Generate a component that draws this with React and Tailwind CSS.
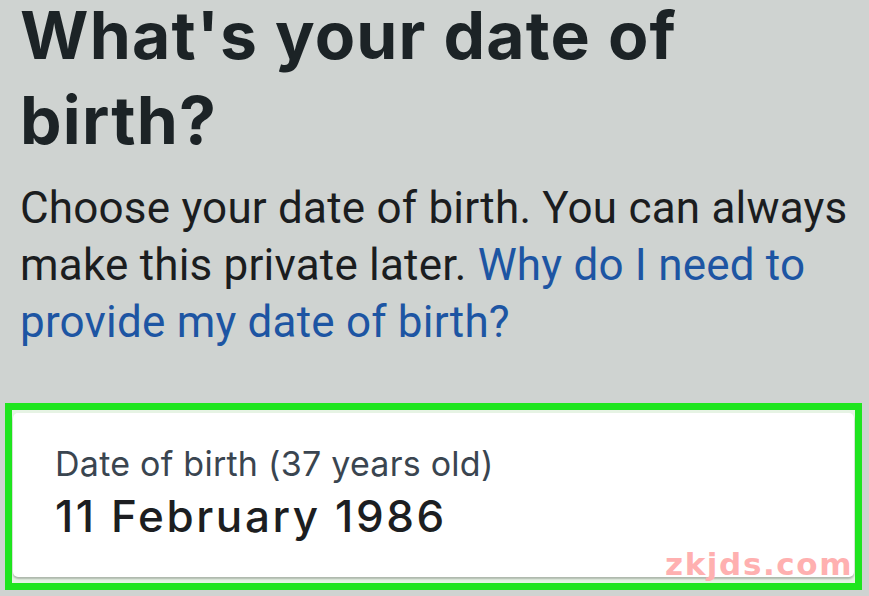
export default function App() {
  return (
    <div className="relative w-[869px] h-[596px] overflow-hidden bg-[#cfd3d1]" style={{ fontFamily: "Inter, Roboto, sans-serif" }}>
      <div className="pl-[20px]">
        <h1 className="text-[66px] leading-[70px] font-bold text-[#1c2326] tracking-[1.2px]">
          <span className="block">What's your date of</span>
          <span className="block mt-[15px]">birth?</span>
        </h1>
        <p className="mt-[25px] text-[44px] leading-[57px] text-[#1b1d1f] tracking-[0.2px] w-[849px]" style={{ fontFamily: "Roboto, sans-serif" }}>
          Choose your date of birth. You can always make this private later.{" "}
          <span className="text-[#1d55a3]">Why do I need to provide my date of birth?</span>
        </p>
      </div>
      <div className="absolute left-[5px] top-[403px] w-[857px] h-[187px] border-[7px] border-[#1fe51f] bg-[#e6f3e4]">
        <div className="mx-[1px] mt-[3px] h-[164px] bg-white rounded-[5px] shadow-[0_2px_2px_rgba(0,0,0,0.25)] pl-[42px] pt-[29px]">
          <div className="text-[34px] leading-[44px] text-[#3a4550] tracking-[0.25px]">Date of birth (37 years old)</div>
          <div className="mt-[4px] text-[44px] leading-[52px] font-medium text-[#1c1e21] tracking-[2.6px]">11 February 1986</div>
        </div>
      </div>
      <div className="absolute left-[665px] top-[549px] text-[31px] leading-[31px] font-bold text-[#ffb0b0] tracking-[1.6px]" style={{ fontFamily: "'DejaVu Sans', sans-serif" }}>
        zkjds.com
      </div>
    </div>
  );
}
